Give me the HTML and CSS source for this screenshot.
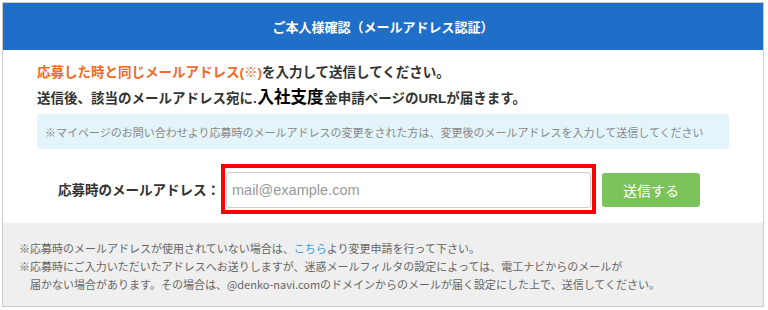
FILE: index.html
```html
<!DOCTYPE html>
<html lang="ja">
<head>
    <meta charset="UTF-8">
    <meta name="viewport" content="width=device-width, initial-scale=1.0">
    <title>ご本人様確認</title>
    <link rel="stylesheet" href="styles.css">
</head>
<body>
    <div class="box">
        <div class="head">ご本人様確認（メールアドレス認証）</div>
        <div class="main">
            <p class="lead"><span class="orange">応募した時と同じメールアドレス(※)</span>を入力して送信してください。</p>
            <p class="lead">送信後、該当のメールアドレス宛に. <span class="big">入社支度</span> 金申請ページのURLが届きます。</p>
            <div class="info">※マイページのお問い合わせより応募時のメールアドレスの変更をされた方は、変更後のメールアドレスを入力して送信してください</div>
            <div class="form">
                <label for="mail">応募時のメールアドレス：</label>
                <div class="frame">
                    <input type="email" id="mail" placeholder="mail@example.com">
                </div>
                <button>送信する</button>
            </div>
        </div>
        <div class="foot">
            <p>※応募時のメールアドレスが使用されていない場合は、<a href="#">こちら</a>より変更申請を行って下さい。</p>
            <p>※応募時にご入力いただいたアドレスへお送りしますが、迷惑メールフィルタの設定によっては、電工ナビからのメールが</p>
            <p class="indent">届かない場合があります。その場合は、@denko-navi.comのドメインからのメールが届く設定にした上で、送信してください。</p>
        </div>
    </div>
</body>
</html>
```

FILE: styles.css
```css
*{
    box-sizing: border-box;
}
body{
    margin: 2px;
    font-family: "Liberation Sans", "Noto Sans CJK JP", sans-serif;
    color: #333;
}
p{
    margin: 0;
}
.box{
    width: 762px;
    border: 1px solid #ccc;
}
.head{
    height: 47px;
    background: #1f6fc9;
    color: #fff;
    font-size: 13px;
    font-weight: bold;
    display: flex;
    align-items: center;
    justify-content: center;
}
.main{
    padding: 11px 34px 9px;
}
.lead{
    font-size: 13.5px;
    font-weight: bold;
    line-height: 24px;
    word-spacing: -3px;
}
.orange{
    color: #f26a1f;
}
.big{
    font-size: 16.5px;
    color: #000;
}
.info{
    margin-top: 3px;
    height: 35px;
    display: flex;
    align-items: center;
    padding: 0 8px;
    background: #e4f4fb;
    border-radius: 3px;
    color: #888;
    font-size: 11px;
}
.form{
    margin-top: 15px;
    padding-left: 21px;
    display: flex;
    align-items: center;
}
label{
    width: 163px;
    padding-right: 1px;
    white-space: nowrap;
    text-align: right;
    font-size: 13.5px;
    font-weight: bold;
}
.frame{
    width: 375px;
    height: 50px;
    border: 4px solid #f00;
    padding: 4px 1px 2px 1px;
}
input{
    display: block;
    width: 100%;
    height: 36px;
    border: 1px solid #ccc;
    border-radius: 3px;
    padding: 0 5px;
    font-family: "Liberation Sans", sans-serif;
    font-size: 14.5px;
}
input::placeholder{
    color: #999;
}
button{
    margin-left: 6px;
    margin-top: 2px;
    width: 98px;
    height: 34px;
    border: none;
    border-radius: 3px;
    background: #7dc35b;
    color: #fff;
    font-family: "Liberation Sans", "Noto Sans CJK JP", sans-serif;
    font-size: 14px;
}
.foot{
    background: #efefef;
    padding: 16px 16px 13px;
    font-family: "Noto Sans CJK JP", sans-serif;
    font-size: 11px;
    line-height: 18px;
    color: #666;
}
.foot a{
    color: #3c9ddc;
    text-decoration: none;
}
.indent{
    padding-left: 11px;
}
```
